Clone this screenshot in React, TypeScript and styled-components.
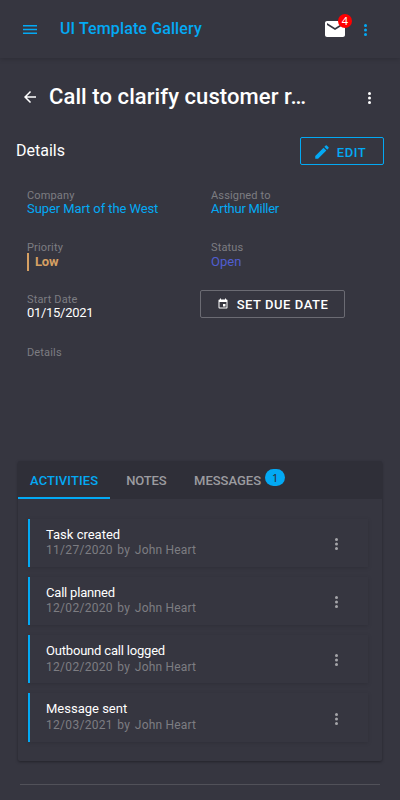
import React from 'react';
import styled, { createGlobalStyle } from 'styled-components';

const accent = '#03a9f4';

const GlobalStyle = createGlobalStyle`
  *, *::before, *::after { box-sizing: border-box; }
  body {
    margin: 0;
    background: #363640;
    color: #fff;
    font-family: Roboto, sans-serif;
    font-size: 13px;
    overflow: hidden;
  }
  button { font-family: inherit; color: inherit; background: none; border: 0; padding: 0; }
  h1, h2, p { margin: 0; }
`;

const Page = styled.div`
  width: 400px;
  height: 800px;
  overflow: hidden;
  background: #363640;
`;

const Header = styled.header`
  display: flex;
  align-items: center;
  height: 58px;
  padding: 2px 26px 0 22px;
  box-shadow: 0 1px 5px rgba(0, 0, 0, 0.18);
`;

const Brand = styled.div`
  flex: 1;
  margin-left: 22px;
  padding-bottom: 2px;
  font-size: 16px;
  line-height: 24px;
  font-weight: 500;
  letter-spacing: 0.12px;
  color: ${accent};
`;

const IconButton = styled.button<{ $color?: string; $w?: number }>`
  display: flex;
  align-items: center;
  justify-content: center;
  flex: none;
  width: ${(p) => p.$w ?? 18}px;
  height: 18px;
  color: ${(p) => p.$color ?? '#fff'};
  svg { display: block; flex: none; }
`;

const MailBox = styled.div`
  position: relative;
  width: 24px;
  height: 24px;
  margin: -2px 10px 0 0;
  svg { display: block; }
`;

const MailBadge = styled.span`
  position: absolute;
  left: 15px;
  top: -3px;
  width: 14px;
  height: 14px;
  border-radius: 50%;
  background: #f00;
  font-size: 11px;
  line-height: 14px;
  text-align: center;
  font-family: 'Noto Sans', sans-serif;
`;

const TitleRow = styled.div`
  display: flex;
  align-items: center;
  height: 30px;
  margin-top: 24px;
  padding: 0 22px 0 21px;
  ${IconButton}:last-child { margin-top: 2px; }
`;

const Title = styled.h1`
  width: 264px;
  margin: 0 auto 0 10px;
  font-size: 22px;
  line-height: 30px;
  font-weight: 500;
  letter-spacing: 0.08px;
  white-space: nowrap;
`;

const SectionHead = styled.div`
  display: flex;
  justify-content: space-between;
  align-items: center;
  height: 28px;
  margin-top: 25px;
  padding: 0 16px;
`;

const SectionTitle = styled.h2`
  font-size: 16px;
  line-height: 20px;
  font-weight: 400;
`;

const OutlineButton = styled.button<{ $tone: string; $line: string; $w: number; $gap: number; $pad: string }>`
  display: flex;
  align-items: center;
  justify-content: center;
  gap: ${(p) => p.$gap}px;
  width: ${(p) => p.$w}px;
  height: 28px;
  padding: ${(p) => p.$pad};
  border: 1px solid ${(p) => p.$line};
  border-radius: 2px;
  color: ${(p) => p.$tone};
  font-size: 13px;
  line-height: 26px;
  font-weight: 500;
  letter-spacing: 0.54px;
  white-space: nowrap;
  span { padding-top: 2px; }
`;

const Fields = styled.div`
  display: grid;
  grid-template-columns: 184px 1fr;
  grid-template-rows: 52px 52px 53px 116px;
  height: 273px;
  margin-top: 23px;
  padding-left: 27px;
`;

const Label = styled.div`
  padding-top: 1px;
  margin-bottom: -1px;
  font-size: 11px;
  line-height: 14px;
  letter-spacing: 0.15px;
  color: #7d7d82;
`;

const Value = styled.div<{ $color?: string; $track?: number }>`
  font-size: 13px;
  line-height: 14px;
  letter-spacing: ${(p) => p.$track ?? 0}px;
  color: ${(p) => p.$color ?? '#fff'};
`;

const Priority = styled.div`
  height: 18px;
  margin-top: -2px;
  padding-left: 6px;
  border-left: 2px solid #d6a063;
  color: #d6a063;
  font-size: 13px;
  line-height: 18px;
  font-weight: 700;
  letter-spacing: -0.2px;
`;

const Status = styled(Value)`
  margin-top: 1px;
`;

const DueCell = styled.div`
  margin: -2px 0 0 -11px;
`;

const Card = styled.section`
  width: 364px;
  height: 300px;
  margin: 0 18px;
  border-radius: 2px;
  box-shadow: 0 1px 3px rgba(0, 0, 0, 0.36);
`;

const Tabs = styled.div`
  display: flex;
  height: 38px;
  background: #2f2f38;
  border-radius: 2px 2px 0 0;
`;

const Tab = styled.button<{ $active?: boolean; $track?: number }>`
  display: flex;
  align-items: center;
  padding: 0 ${(p) => (p.$active ? 12 : 16)}px;
  font-size: 13px;
  font-weight: 500;
  letter-spacing: ${(p) => p.$track ?? 0}px;
  color: ${(p) => (p.$active ? accent : '#9c9ca0')};
  box-shadow: ${(p) => (p.$active ? `inset 0 -2px ${accent}` : 'none')};
  & + & + & { padding-left: 11.6px; }
`;

const Count = styled.span`
  width: 20px;
  height: 17px;
  margin: -6px 0 0 4px;
  border-radius: 9px;
  background: ${accent};
  color: #2a2a32;
  font-size: 11px;
  line-height: 17px;
  font-weight: 400;
  text-align: center;
  font-family: 'Noto Sans', sans-serif;
`;

const List = styled.div`
  display: flex;
  flex-direction: column;
  gap: 10px;
  padding: 20px 14px 0 10px;
`;

const Item = styled.article`
  display: flex;
  align-items: flex-start;
  justify-content: space-between;
  height: 48.15px;
  padding: 7.8px 23px 0 16px;
  border-left: 2px solid ${accent};
  box-shadow: 0 1px 4px rgba(0, 0, 0, 0.13);
  ${IconButton} { margin-top: 8.33px; }
`;

const ItemTitle = styled.p<{ $track: number }>`
  margin-bottom: 0.45px;
  font-size: 13px;
  line-height: 16px;
  letter-spacing: ${(p) => p.$track}px;
`;

const ItemMeta = styled.p`
  display: flex;
  gap: 4.5px;
  font-size: 12px;
  line-height: 15px;
  letter-spacing: 0.3px;
  color: #7d7d82;
  span:last-child { letter-spacing: 0.2px; }
`;

const Divider = styled.div`
  height: 1px;
  margin: 23px 20px 0;
  background: #515159;
`;

const Dots = () => (
  <svg width="3" height="12" viewBox="0 0 3 12" fill="currentColor">
    <circle cx="1.5" cy="1.5" r="1.5" />
    <circle cx="1.5" cy="6" r="1.5" />
    <circle cx="1.5" cy="10.5" r="1.5" />
  </svg>
);

const MenuIcon = () => (
  <svg width="14" height="10" viewBox="0 0 14 10" fill="currentColor">
    <path d="M0 0h14v1.500H0zM0 3.800h14v1.500H0zM0 7.600h14v1.500H0z" />
  </svg>
);

const BackIcon = () => (
  <svg width="18" height="18" viewBox="0 0 24 24" fill="currentColor">
    <path d="M20 11H7.83l5.59-5.59L12 4l-8 8 8 8 1.41-1.41L7.83 13H20z" />
  </svg>
);

const MailIcon = () => (
  <svg width="24" height="24" viewBox="0 0 24 24" fill="currentColor">
    <path d="M20 4H4c-1.100 0-2 .9-2 2v12c0 1.100.9 2 2 2h16c1.100 0 2-.9 2-2V6c0-1.100-.9-2-2-2zm0 4-8 5-8-5V6l8 5 8-5z" />
  </svg>
);

const PencilIcon = () => (
  <svg width="18" height="18" viewBox="0 0 24 24" fill="currentColor">
    <path d="M3 17.250V21h3.750L17.810 9.940l-3.750-3.750zM20.710 7.040a1 1 0 0 0 0-1.410l-2.340-2.340a1 1 0 0 0-1.410 0l-1.830 1.830 3.750 3.750z" />
  </svg>
);

const CalendarIcon = () => (
  <svg width="12" height="12" viewBox="0 0 24 24" fill="currentColor">
    <path d="M17 12h-5v5h5zM16 1v2H8V1H6v2H5c-1.110 0-2 .9-2 2v14a2 2 0 0 0 2 2h14c1.100 0 2-.9 2-2V5c0-1.100-.9-2-2-2h-1V1zm3 18H5V8h14z" />
  </svg>
);

const activities = [
  { title: 'Task created', date: '11/27/2020', track: 0 },
  { title: 'Call planned', date: '12/02/2020', track: -0.2 },
  { title: 'Outbound call logged', date: '12/02/2020', track: -0.19 },
  { title: 'Message sent', date: '12/03/2021', track: 0 },
];

export default function App() {
  return (
    <Page>
      <GlobalStyle />
      <Header>
        <IconButton $color={accent} $w={16} aria-label="Menu"><MenuIcon /></IconButton>
        <Brand>UI Template Gallery</Brand>
        <MailBox>
          <MailIcon />
          <MailBadge>4</MailBadge>
        </MailBox>
        <IconButton $color={accent} $w={17} aria-label="More"><Dots /></IconButton>
      </Header>

      <TitleRow>
        <IconButton aria-label="Back"><BackIcon /></IconButton>
        <Title>Call to clarify customer r…</Title>
        <IconButton $w={17} aria-label="More"><Dots /></IconButton>
      </TitleRow>

      <SectionHead>
        <SectionTitle>Details</SectionTitle>
        <OutlineButton $tone={accent} $line={accent} $w={84} $gap={6} $pad="2px 5px 0 0">
          <PencilIcon /><span>EDIT</span>
        </OutlineButton>
      </SectionHead>

      <Fields>
        <div>
          <Label>Company</Label>
          <Value $color={accent} $track={-0.09}>Super Mart of the West</Value>
        </div>
        <div>
          <Label>Assigned to</Label>
          <Value $color={accent} $track={-0.28}>Arthur Miller</Value>
        </div>
        <div>
          <Label>Priority</Label>
          <Priority>Low</Priority>
        </div>
        <div>
          <Label>Status</Label>
          <Status $color="#505ed0">Open</Status>
        </div>
        <div>
          <Label>Start Date</Label>
          <Value $track={-0.3}>01/15/2021</Value>
        </div>
        <DueCell>
          <OutlineButton $tone="#fff" $line="#6b6b73" $w={145} $gap={8} $pad="0">
            <CalendarIcon /><span>SET DUE DATE</span>
          </OutlineButton>
        </DueCell>
        <Label>Details</Label>
      </Fields>

      <Card>
        <Tabs>
          <Tab $active $track={0.1}>ACTIVITIES</Tab>
          <Tab $track={-0.15}>NOTES</Tab>
          <Tab>MESSAGES<Count>1</Count></Tab>
        </Tabs>
        <List>
          {activities.map((a) => (
            <Item key={a.title}>
              <div>
                <ItemTitle $track={a.track}>{a.title}</ItemTitle>
                <ItemMeta><span>{a.date}</span><span>by</span><span>John Heart</span></ItemMeta>
              </div>
              <IconButton $color="#a5a5a9" $w={17} aria-label="More"><Dots /></IconButton>
            </Item>
          ))}
        </List>
      </Card>
      <Divider />
    </Page>
  );
}
